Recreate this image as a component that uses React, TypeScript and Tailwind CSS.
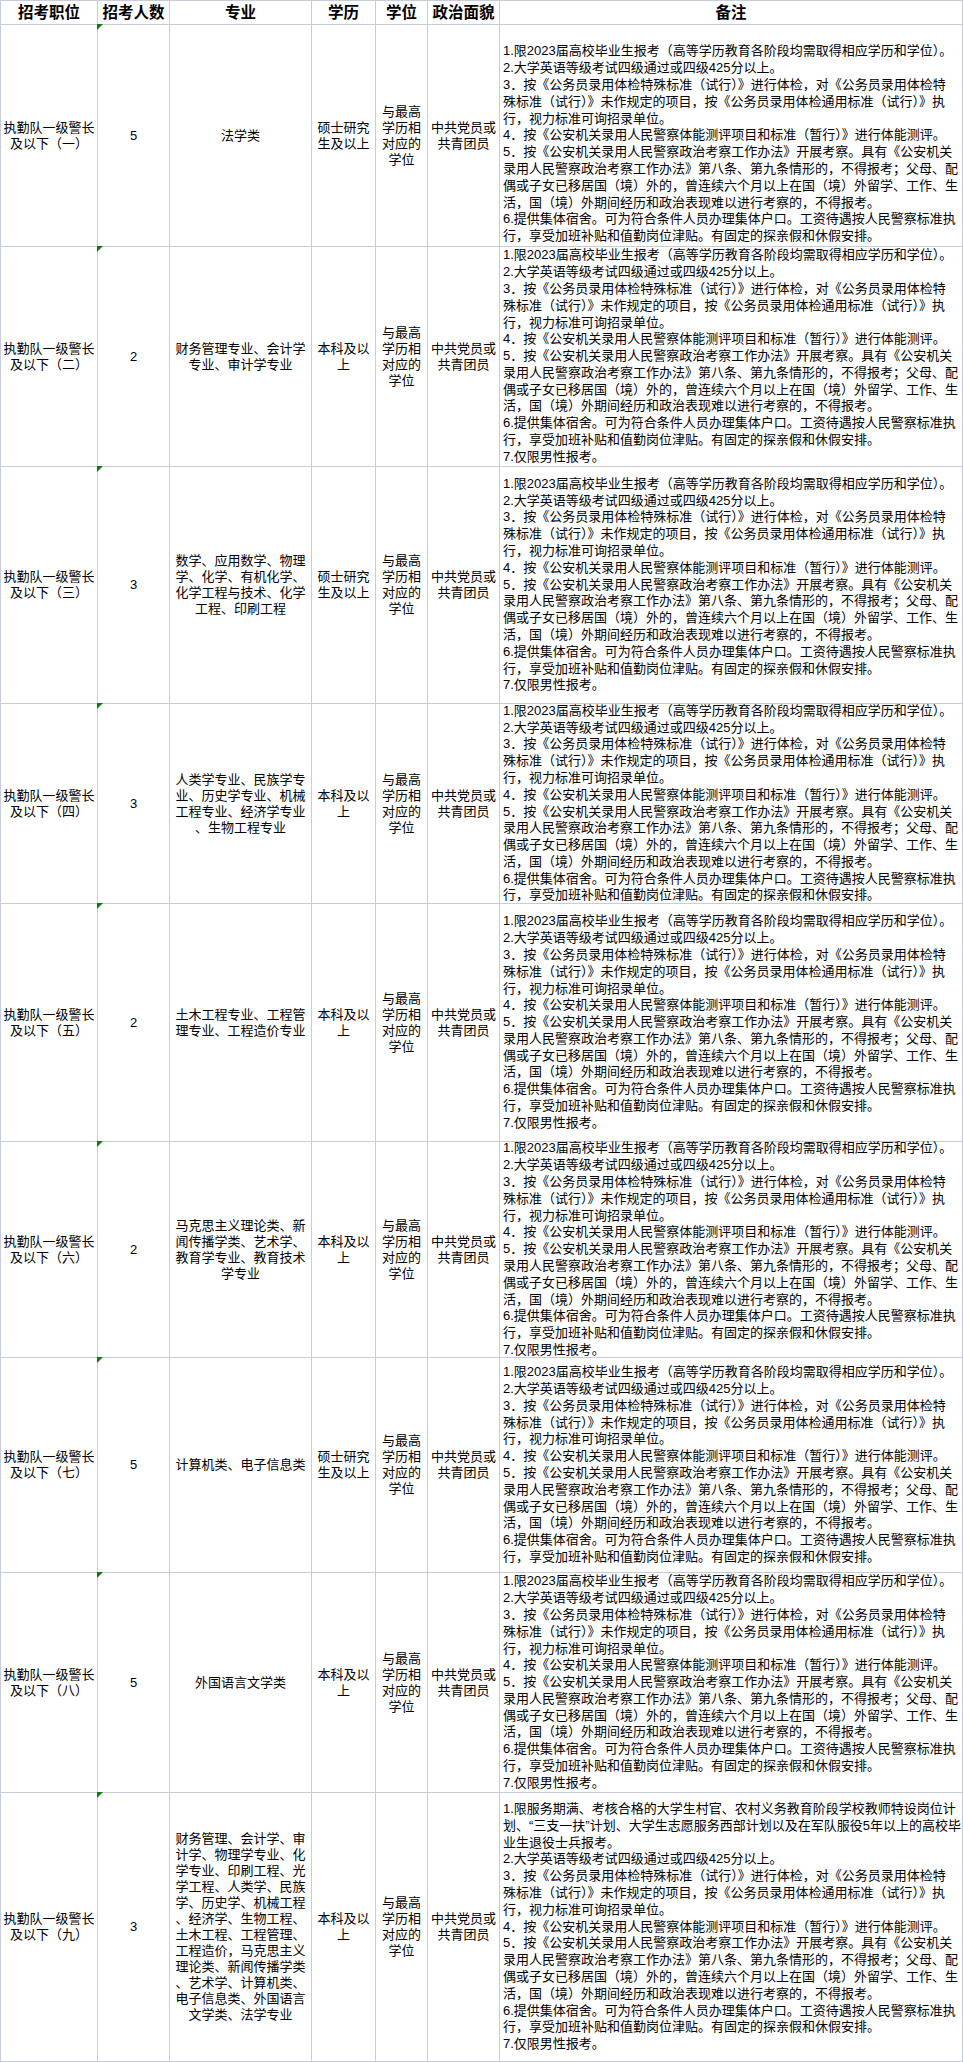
type Row = {
  no: string;
  count: string;
  major: string[];
  edu: string[];
  height: string;
  male: boolean;
  first?: string[];
  alignEnd?: boolean;
};

const FIRST = ["1.限2023届高校毕业生报考（高等学历教育各阶段均需取得相应学历和学位）。"];

const COMMON = [
  "2.大学英语等级考试四级通过或四级425分以上。",
  "3．按《公务员录用体检特殊标准（试行）》进行体检，对《公务员录用体检特",
  "殊标准（试行）》未作规定的项目，按《公务员录用体检通用标准（试行）》执",
  "行，视力标准可询招录单位。",
  "4．按《公安机关录用人民警察体能测评项目和标准（暂行）》进行体能测评。",
  "5．按《公安机关录用人民警察政治考察工作办法》开展考察。具有《公安机关",
  "录用人民警察政治考察工作办法》第八条、第九条情形的，不得报考；父母、配",
  "偶或子女已移居国（境）外的，曾连续六个月以上在国（境）外留学、工作、生",
  "活，国（境）外期间经历和政治表现难以进行考察的，不得报考。",
  "6.提供集体宿舍。可为符合条件人员办理集体户口。工资待遇按人民警察标准执",
  "行，享受加班补贴和值勤岗位津贴。有固定的探亲假和休假安排。",
];

const MASTER = ["硕士研究", "生及以上"];
const BACHELOR = ["本科及以", "上"];

const rows: Row[] = [
  { no: "一", count: "5", major: ["法学类"], edu: MASTER, height: "h-[222px]", male: false, alignEnd: true },
  { no: "二", count: "2", major: ["财务管理专业、会计学", "专业、审计学专业"], edu: BACHELOR, height: "h-[220px]", male: true },
  {
    no: "三",
    count: "3",
    major: ["数学、应用数学、物理", "学、化学、有机化学、", "化学工程与技术、化学", "工程、印刷工程"],
    edu: MASTER,
    height: "h-[237px]",
    male: true,
  },
  {
    no: "四",
    count: "3",
    major: ["人类学专业、民族学专", "业、历史学专业、机械", "工程专业、经济学专业", "、生物工程专业"],
    edu: BACHELOR,
    height: "h-[200px]",
    male: false,
  },
  { no: "五", count: "2", major: ["土木工程专业、工程管", "理专业、工程造价专业"], edu: BACHELOR, height: "h-[238px]", male: true },
  {
    no: "六",
    count: "2",
    major: ["马克思主义理论类、新", "闻传播学类、艺术学、", "教育学专业、教育技术", "学专业"],
    edu: BACHELOR,
    height: "h-[216px]",
    male: true,
  },
  { no: "七", count: "5", major: ["计算机类、电子信息类"], edu: MASTER, height: "h-[215px]", male: false },
  { no: "八", count: "5", major: ["外国语言文学类"], edu: BACHELOR, height: "h-[220px]", male: true },
  {
    no: "九",
    count: "3",
    major: [
      "财务管理、会计学、审",
      "计学、物理学专业、化",
      "学专业、印刷工程、光",
      "学工程、人类学、民族",
      "学、历史学、机械工程",
      "、经济学、生物工程、",
      "土木工程、工程管理、",
      "工程造价，马克思主义",
      "理论类、新闻传播学类",
      "、艺术学、计算机类、",
      "电子信息类、外国语言",
      "文学类、法学专业",
    ],
    edu: BACHELOR,
    height: "h-[269px]",
    male: true,
    first: [
      "1.限服务期满、考核合格的大学生村官、农村义务教育阶段学校教师特设岗位计",
      "划、“三支一扶”计划、大学生志愿服务西部计划以及在军队服役5年以上的高校毕",
      "业生退役士兵报考。",
    ],
  },
];

const cellBase = "flex flex-col items-center justify-center border-l border-t border-[#c6ccd9] text-center";

function Lines({ lines }: { lines: string[] }) {
  return (
    <div className="leading-[16px]">
      {lines.map((l, i) => (
        <div key={i} className="whitespace-nowrap">
          {l}
        </div>
      ))}
    </div>
  );
}

function Header() {
  const th = "flex items-center justify-center border-l border-t border-[#c6ccd9] text-[15.5px] font-bold";
  return (
    <div className="flex h-[24px]">
      <div className={`${th} w-[97px]`}>招考职位</div>
      <div className={`${th} w-[72px]`}>招考人数</div>
      <div className={`${th} w-[142px]`}>专业</div>
      <div className={`${th} w-[64px]`}>学历</div>
      <div className={`${th} w-[52px]`}>学位</div>
      <div className={`${th} w-[72px]`}>政治面貌</div>
      <div className={`${th} w-[463px]`}>备注</div>
    </div>
  );
}

function DataRow({ row }: { row: Row }) {
  const remarks = [...(row.first ?? FIRST), ...COMMON, ...(row.male ? ["7.仅限男性报考。"] : [])];
  return (
    <div className={`flex ${row.height}`}>
      <div className={`${cellBase} w-[97px]`}>
        <Lines lines={["执勤队一级警长", `及以下（${row.no}）`]} />
      </div>
      <div className={`${cellBase} relative w-[72px]`}>
        {/* green corner marker, like the spreadsheet's cell flag */}
        <span className="absolute -left-px -top-px h-0 w-0 border-r-[6px] border-t-[6px] border-r-transparent border-t-[#0a7d0a]" />
        <span>{row.count}</span>
      </div>
      <div className={`${cellBase} w-[142px]`}>
        <Lines lines={row.major} />
      </div>
      <div className={`${cellBase} w-[64px]`}>
        <Lines lines={row.edu} />
      </div>
      <div className={`${cellBase} w-[52px]`}>
        <Lines lines={["与最高", "学历相", "对应的", "学位"]} />
      </div>
      <div className={`${cellBase} w-[72px]`}>
        <Lines lines={["中共党员或", "共青团员"]} />
      </div>
      <div
        className={`flex w-[463px] flex-col overflow-visible border-l border-t border-[#c6ccd9] pl-[3px] text-left leading-[16.8px] ${
          row.alignEnd ? "justify-end pb-[1px]" : "justify-center"
        }`}
      >
        {remarks.map((l, i) => (
          <div key={i} className="whitespace-nowrap">
            {l}
          </div>
        ))}
      </div>
    </div>
  );
}

export default function App() {
  return (
    <div
      className="w-[963px] bg-white text-[13px] text-black"
      style={{ fontFamily: '"Liberation Sans", "Noto Sans CJK SC", sans-serif' }}
    >
      <div className="w-[963px] border-b border-r border-[#c6ccd9]">
        <Header />
        {rows.map((r) => (
          <DataRow key={r.no} row={r} />
        ))}
      </div>
    </div>
  );
}
